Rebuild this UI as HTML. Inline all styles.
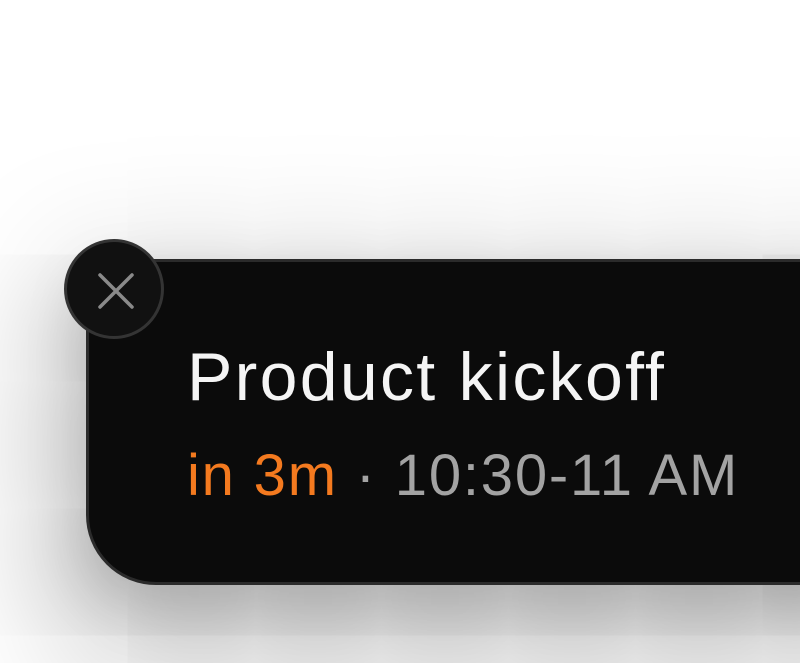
<!DOCTYPE html>
<html><head><style>
html,body{margin:0;padding:0;}
body{width:800px;height:663px;overflow:hidden;background:#fff;position:relative;font-family:"Liberation Sans",sans-serif;font-variant-ligatures:none;}
.card{position:absolute;left:86px;top:259px;width:760px;height:320px;background:#0b0b0b;border:3px solid #2b2b2b;border-radius:22px 0 0 70px;box-shadow:0 50px 160px 40px rgba(0,0,0,0.25),0 20px 60px rgba(0,0,0,0.18);}
.close{position:absolute;left:64px;top:239px;width:94px;height:94px;border-radius:50%;background:#111;border:3px solid #343434;}
.t1{position:absolute;left:187px;top:338px;font-size:68px;color:#f5f5f5;white-space:nowrap;letter-spacing:2.3px;}
.t2{position:absolute;left:187px;top:442px;font-size:58px;color:#a3a3a3;white-space:nowrap;letter-spacing:1.8px;}
.o{color:#f47a1f;}
</style></head><body>
<div class="card"></div>
<div class="close"><svg width="94" height="94" viewBox="0 0 94 94" style="position:absolute;left:0;top:0"><path d="M33 33L65 65M65 33L33 65" stroke="#8a8a8a" stroke-width="3.5" stroke-linecap="round"/></svg></div>
<div class="t1">Product kickoff</div>
<div class="t2"><span class="o">in 3m</span> · 10:30-11 AM</div>
</body></html>
